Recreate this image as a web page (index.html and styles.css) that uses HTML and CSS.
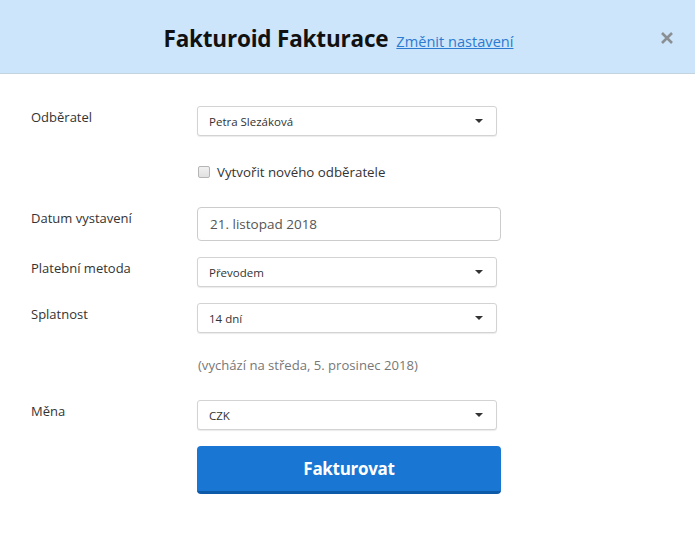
FILE: index.html
```html
<!DOCTYPE html>
<html lang="cs">
<head>
<meta charset="utf-8">
<title>Fakturoid Fakturace</title>
<link rel="stylesheet" href="styles.css">
</head>
<body>
<div class="dialog">
  <header class="head">
    <h1 class="title">Fakturoid Fakturace</h1>
    <a class="settings" href="#">Změnit nastavení</a>
    <button class="close" aria-label="Zavřít">
      <svg width="14" height="14" viewBox="0 0 14 14"><path d="M2 2L12 12M12 2L2 12" stroke="#8a8f94" stroke-width="2.6" stroke-linecap="butt"/></svg>
    </button>
  </header>
  <main class="form">
    <div class="row r-client">
      <label class="lbl">Odběratel</label>
      <div class="select"><span>Petra Slezáková</span><i class="caret"></i></div>
    </div>
    <div class="row r-check">
      <span></span>
      <label class="check"><span class="box"></span>Vytvořit nového odběratele</label>
    </div>
    <div class="row r-date">
      <label class="lbl">Datum vystavení</label>
      <div class="input">21. listopad 2018</div>
    </div>
    <div class="row r-pay">
      <label class="lbl">Platební metoda</label>
      <div class="select"><span>Převodem</span><i class="caret"></i></div>
    </div>
    <div class="row r-due">
      <label class="lbl">Splatnost</label>
      <div class="select"><span>14 dní</span><i class="caret"></i></div>
    </div>
    <div class="row r-hint">
      <span></span>
      <p class="hint">(vychází na středa, 5. prosinec 2018)</p>
    </div>
    <div class="row r-cur">
      <label class="lbl">Měna</label>
      <div class="select"><span>CZK</span><i class="caret"></i></div>
    </div>
    <div class="row r-btn">
      <span></span>
      <button class="submit">Fakturovat</button>
    </div>
  </main>
</div>
</body>
</html>
```

FILE: styles.css
```css
* { box-sizing: border-box; }
html, body { margin: 0; padding: 0; background: #fff; }
body {
  font-family: "Open Sans", "Noto Sans", sans-serif;
  color: #333;
  width: 695px;
  height: 533px;
  overflow: hidden;
}
.dialog { width: 695px; }
.head {
  position: relative;
  height: 74px;
  background: #cde5fa;
  border-bottom: 1px solid #c3d3e0;
  display: flex;
  align-items: center;
  justify-content: center;
  gap: 8px;
  padding: 4px 18px 0 0;
}
.title {
  margin: 0;
  font-size: 22.5px;
  font-weight: 700;
  color: #111;
  letter-spacing: -0.2px;
}
.settings {
  font-size: 14.6px;
  color: #2a7bd1;
  text-decoration: underline;
  margin-top: 4px;
}
.close {
  position: absolute;
  right: 21px;
  top: 31px;
  border: 0;
  background: none;
  padding: 0;
  width: 14px;
  height: 14px;
  display: block;
}
.close svg { display: block; }
.form {
  padding: 32px 0 0 31px;
}
.row {
  display: grid;
  grid-template-columns: 166px 300px;
  align-items: start;
}
.lbl {
  font-size: 13px;
  line-height: 20px;
  padding-top: 1px;
  color: #333;
}
.select {
  height: 30px;
  border: 1px solid #d3d3d3;
  border-radius: 3px;
  box-shadow: 0 1px 1px rgba(0,0,0,0.08);
  display: flex;
  align-items: center;
  justify-content: space-between;
  padding: 0 13px 0 11px;
  font-size: 11.5px;
  color: #333;
  background: #fff;
}
.caret {
  width: 0;
  height: 0;
  border-left: 4px solid transparent;
  border-right: 4px solid transparent;
  border-top: 4px solid #333;
}
.r-client { margin-bottom: 26px; }
.r-check { margin-bottom: 25px; }
.check {
  display: flex;
  align-items: center;
  gap: 7px;
  font-size: 13.3px;
  line-height: 20px;
  color: #333;
  padding-left: 1px;
}
.box {
  width: 12px;
  height: 12px;
  border: 1px solid #b5b5b5;
  border-radius: 2px;
  background: linear-gradient(#f1f1f1, #e0e0e0);
}
.r-date { margin-bottom: 16px; grid-template-columns: 166px 304px; }
.input {
  height: 34px;
  border: 1px solid #ccc;
  border-radius: 4px;
  padding: 0 12px;
  display: flex;
  align-items: center;
  font-size: 13.5px;
  color: #555;
}
.r-pay { margin-bottom: 16px; }
.r-due { margin-bottom: 22px; }
.r-hint { margin-bottom: 25px; }
.hint {
  margin: 0;
  font-size: 13.1px;
  line-height: 20px;
  color: #777;
  padding-left: 1px;
}
.r-cur { margin-bottom: 16px; }
.r-btn { grid-template-columns: 166px 304px; }
.submit {
  height: 48px;
  border: 0;
  border-bottom: 3px solid #0d5ba8;
  border-radius: 4px;
  background: #1976d2;
  color: #fff;
  font-family: "Open Sans", "Noto Sans", sans-serif;
  font-size: 17px;
  font-weight: 700;
  letter-spacing: -0.3px;
  padding: 0;
}
```
